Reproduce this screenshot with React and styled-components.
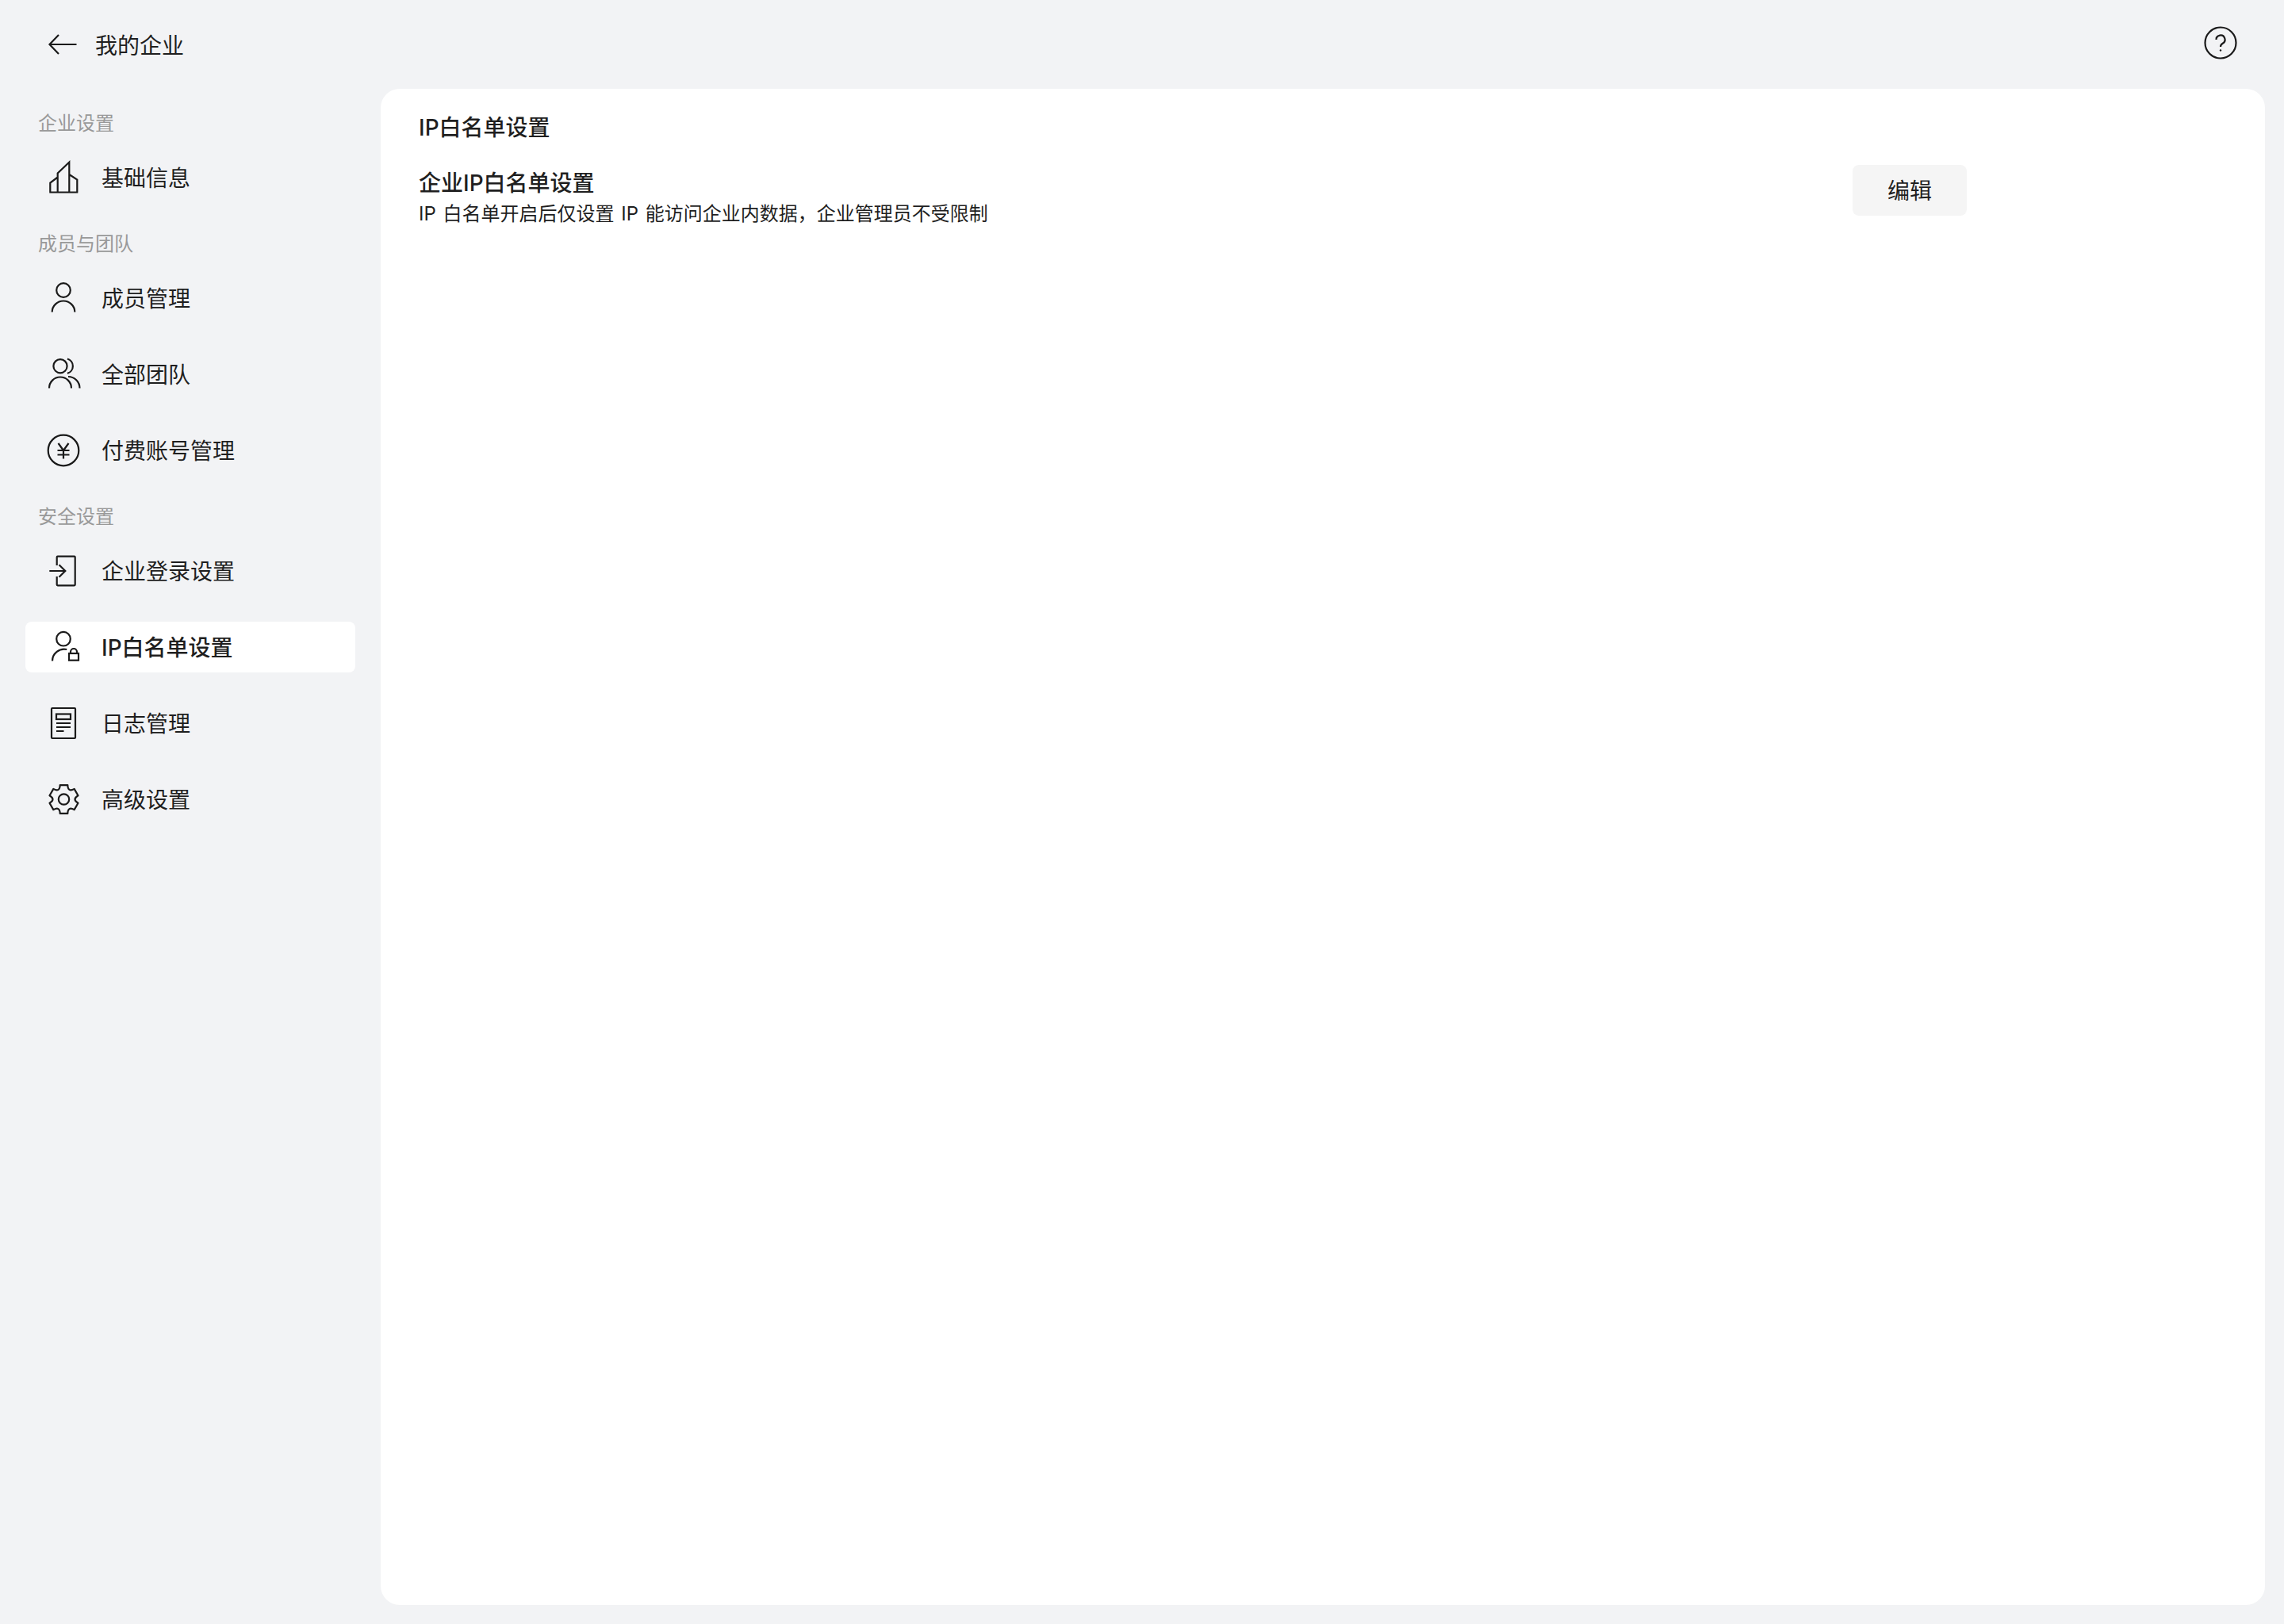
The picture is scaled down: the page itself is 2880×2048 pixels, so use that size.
import React from 'react';
import styled, { createGlobalStyle } from 'styled-components';

const Global = createGlobalStyle`
  html, body { margin: 0; padding: 0; background: #f2f3f5; }
  * { box-sizing: border-box; }
`;
const FONT = `Inter, "Noto Sans CJK SC", sans-serif`;
const Page = styled.div`
  width: 2880px; height: 2048px; background: #f2f3f5; display: grid;
  grid-template-columns: 480px 1fr; grid-template-rows: 112px 1fr;
  font-family: ${FONT}; color: #1f1f1f; overflow: hidden;
`;
const Header = styled.header`
  grid-column: 1 / 3; display: flex; align-items: flex-start; justify-content: space-between;
  padding: 0 56px;
`;
const Back = styled.div`
  display: flex; align-items: center; gap: 16px; font-size: 28px; line-height: 40px; margin-top: 34px;
`;
const Help = styled.div`
  margin-top: 30px;
`;
const Sidebar = styled.nav`
  display: flex; flex-direction: column; gap: 33px; padding: 25px 32px 0;
`;
const Section = styled.section`
  display: flex; flex-direction: column; gap: 32px;
`;
const SectionTitle = styled.div`
  height: 36px; line-height: 38px; font-size: 24px; color: #999; padding-left: 16px; margin-bottom: -13px;
`;
const Item = styled.div`
  height: 64px; display: flex; align-items: center; gap: 24px; padding-left: 24px;
  font-size: 28px; border-radius: 8px;
  background: ${p => (p.$active ? '#fff' : 'transparent')};
  font-weight: ${p => (p.$active ? 500 : 400)};
`;
const Label = styled.span`
  padding-bottom: 2px;
`;
const Main = styled.main`
  margin: 0 24px 24px 0; background: #fff; border-radius: 24px; padding: 33px 48px;
`;
const Title = styled.h1`
  margin: 0; font-size: 28px; line-height: 32px; font-weight: 500;
`;
const Row = styled.div`
  display: flex; justify-content: space-between; align-items: flex-start;
  width: 1952px; margin-top: 31px;
`;
const RowText = styled.div`
  padding-top: 3px;
`;
const RowTitle = styled.div`
  font-size: 28px; line-height: 40px; font-weight: 500;
`;
const RowDesc = styled.div`
  font-size: 24px; line-height: 36px; word-spacing: 2px; margin-top: 1px;
`;
const EditButton = styled.button`
  width: 144px; height: 64px; border: 0; border-radius: 8px; background: #f5f5f5;
  font: 400 28px ${FONT}; color: #1f1f1f; padding: 0 0 2px;
`;
const Svg = styled.svg`
  display: block; flex: none; fill: none; stroke: #1a1a1a; stroke-width: 2.2;
`;

const Icon = ({ children }) => <Svg width="48" height="48" viewBox="0 0 48 48">{children}</Svg>;

const polar = (deg, r) => {
  const t = (deg * Math.PI) / 180;
  return `${(24.5 + r * Math.cos(t)).toFixed(2)} ${(24 + r * Math.sin(t)).toFixed(2)}`;
};
const gearPath = () => {
  let d = `M${polar(-105, 18.6)}`;
  for (let i = 0; i < 6; i += 1) {
    const a = -90 + 60 * i;
    d += `L${polar(a + 15, 18.6)}Q${polar(a + 30, 10)} ${polar(a + 45, 18.6)}`;
  }
  return `${d}Z`;
};

const icons = {
  building: <Icon><path d="M7.3 42.5V30.5l9.4-7M16.7 42.5V18.5L31.3 4.5v38M31.3 20l10 6.5v16M6.3 42.5h36" /></Icon>,
  person: <Icon><circle cx="24" cy="14" r="8.8" /><path d="M9.7 41.5a14.3 14 0 0 1 28.6 0" /></Icon>,
  team: <Icon><circle cx="20" cy="13.7" r="8.6" /><path d="M6 41.5a14 14 0 0 1 28 0M29 4.5a9.6 9.6 0 0 1 0 18.4M30 27a14.5 14.5 0 0 1 14.5 14.5" /></Icon>,
  yuan: <Icon><circle cx="24" cy="24" r="19.3" /><path d="M17.5 15l6.5 9 6.5-9M16.5 24h15M16.5 29.5h15M24 24v10.5" /></Icon>,
  login: <Icon><path d="M15.7 17V6.7a1 1 0 0 1 1-1h21a1 1 0 0 1 1 1v34.6a1 1 0 0 1-1 1h-21a1 1 0 0 1-1-1V31M6.3 24h20M18.5 16.3l7.8 7.7-7.8 7.7" /></Icon>,
  lock: <Icon><circle cx="24" cy="13.7" r="8.8" /><path d="M10 41.5A15 15 0 0 1 28.3 27" /><rect x="31" y="32" width="12" height="8.7" /><path d="M33 32v-2a4 4 0 0 1 8 0v2" /></Icon>,
  log: <Icon><rect x="9" y="5" width="30" height="38" rx="1" /><rect x="15" y="12.5" width="18" height="6.5" /><path d="M15 24h18M15 29h18M15 34h9.5" /></Icon>,
  gear: <Icon><circle cx="24.5" cy="24" r="6.7" /><path d={gearPath()} strokeLinejoin="round" /></Icon>,
};

const nav = [
  { title: '企业设置', items: [['building', '基础信息']] },
  { title: '成员与团队', items: [['person', '成员管理'], ['team', '全部团队'], ['yuan', '付费账号管理']] },
  { title: '安全设置', items: [['login', '企业登录设置'], ['lock', 'IP白名单设置', true], ['log', '日志管理'], ['gear', '高级设置']] },
];

export default function App() {
  return (
    <Page>
      <Global />
      <Header>
        <Back>
          <Icon><path d="M6.5 22h34M18 10L6.5 22 18 34" /></Icon>
          <span>我的企业</span>
        </Back>
        <Help>
          <Icon><circle cx="24" cy="24" r="19.5" /><path d="M18.5 20a5.5 5.5 0 1 1 8.2 4.8c-1.8 1-2.7 2.2-2.7 4.2" /><circle cx="24" cy="33.5" r="1.2" fill="#1a1a1a" stroke="none" /></Icon>
        </Help>
      </Header>
      <Sidebar>
        {nav.map(s => (
          <Section key={s.title}>
            <SectionTitle>{s.title}</SectionTitle>
            {s.items.map(([icon, label, active]) => (
              <Item key={label} $active={active}>{icons[icon]}<Label>{label}</Label></Item>
            ))}
          </Section>
        ))}
      </Sidebar>
      <Main>
        <Title>IP白名单设置</Title>
        <Row>
          <RowText>
            <RowTitle>企业IP白名单设置</RowTitle>
            <RowDesc>IP 白名单开启后仅设置 IP 能访问企业内数据，企业管理员不受限制</RowDesc>
          </RowText>
          <EditButton>编辑</EditButton>
        </Row>
      </Main>
    </Page>
  );
}
